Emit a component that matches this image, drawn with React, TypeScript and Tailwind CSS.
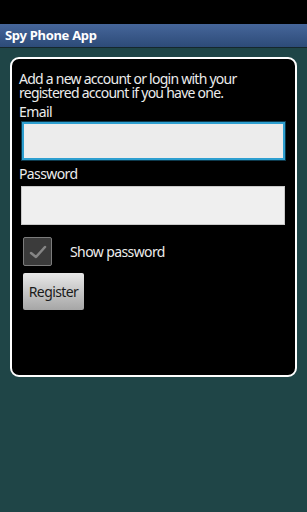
import { useState } from "react";

export default function App() {
  const [email, setEmail] = useState("");
  const [password, setPassword] = useState("");
  const [show, setShow] = useState(true);

  return (
    <div className="w-full h-[512px] bg-[#1f4547] flex flex-col font-['Noto_Sans',sans-serif] text-[#ececec] overflow-hidden">
      {/* Status bar */}
      <div className="h-[24px] bg-black shrink-0" />

      {/* Title bar */}
      <div className="h-[24px] shrink-0 flex items-center pl-[5px] bg-gradient-to-b from-[#46669a] to-[#2d4b78] border-b border-[#15272c]">
        <span className="text-[13px] tracking-[-0.3px] font-bold text-white leading-none">Spy Phone App</span>
      </div>

      {/* Card */}
      <div className="px-[10px] pt-[9px]">
        <div className="h-[320px] border-2 border-white rounded-[9px] bg-black px-[7px] pt-[13px] text-[14px] tracking-[-0.6px]">
          <p className="leading-[14px] tracking-[-0.75px] pr-[40px]">
            Add a new account or login with your registered account if you have one.
          </p>

          <label className="block mt-[3px] leading-[18px]">Email</label>
          <div className="mt-px mx-[3px] h-[38px] border-2 border-[#2e9fd0] outline outline-1 outline-[#0d3a4d]">
            <input
              value={email}
              onChange={(e) => setEmail(e.target.value)}
              className="w-full h-full bg-[#ececec] outline-none px-2 text-black"
            />
          </div>

          <label className="block mt-[5px] leading-[18px]">Password</label>
          <input
            type={show ? "text" : "password"}
            value={password}
            onChange={(e) => setPassword(e.target.value)}
            className="block mt-[3px] ml-[2px] mr-[3px] w-[264px] h-[39px] bg-[#efefef] border border-[#c9c9c9] outline-none px-2 text-black"
          />

          <div className="mt-[12px] ml-[4px] flex items-center gap-[18px]">
            <button
              onClick={() => setShow(!show)}
              className="w-[29px] h-[29px] bg-[#3b3b3b] border border-[#7c7c7c] rounded-[2px] flex items-center justify-center"
            >
              {show && (
                <svg width="20" height="16" viewBox="0 0 20 16">
                  <polyline
                    points="3,9 8,13 17,3"
                    fill="none"
                    stroke="#858585"
                    strokeWidth="2.5"
                    strokeLinecap="round"
                    strokeLinejoin="round"
                  />
                </svg>
              )}
            </button>
            <span className="leading-[18px]">Show password</span>
          </div>

          <button className="mt-[7px] ml-[4px] w-[61px] h-[37px] rounded-[2px] bg-gradient-to-b from-[#e8e8e8] to-[#a6a6a6] text-[#1a1a1a] leading-[18px]">
            Register
          </button>
        </div>
      </div>
    </div>
  );
}
